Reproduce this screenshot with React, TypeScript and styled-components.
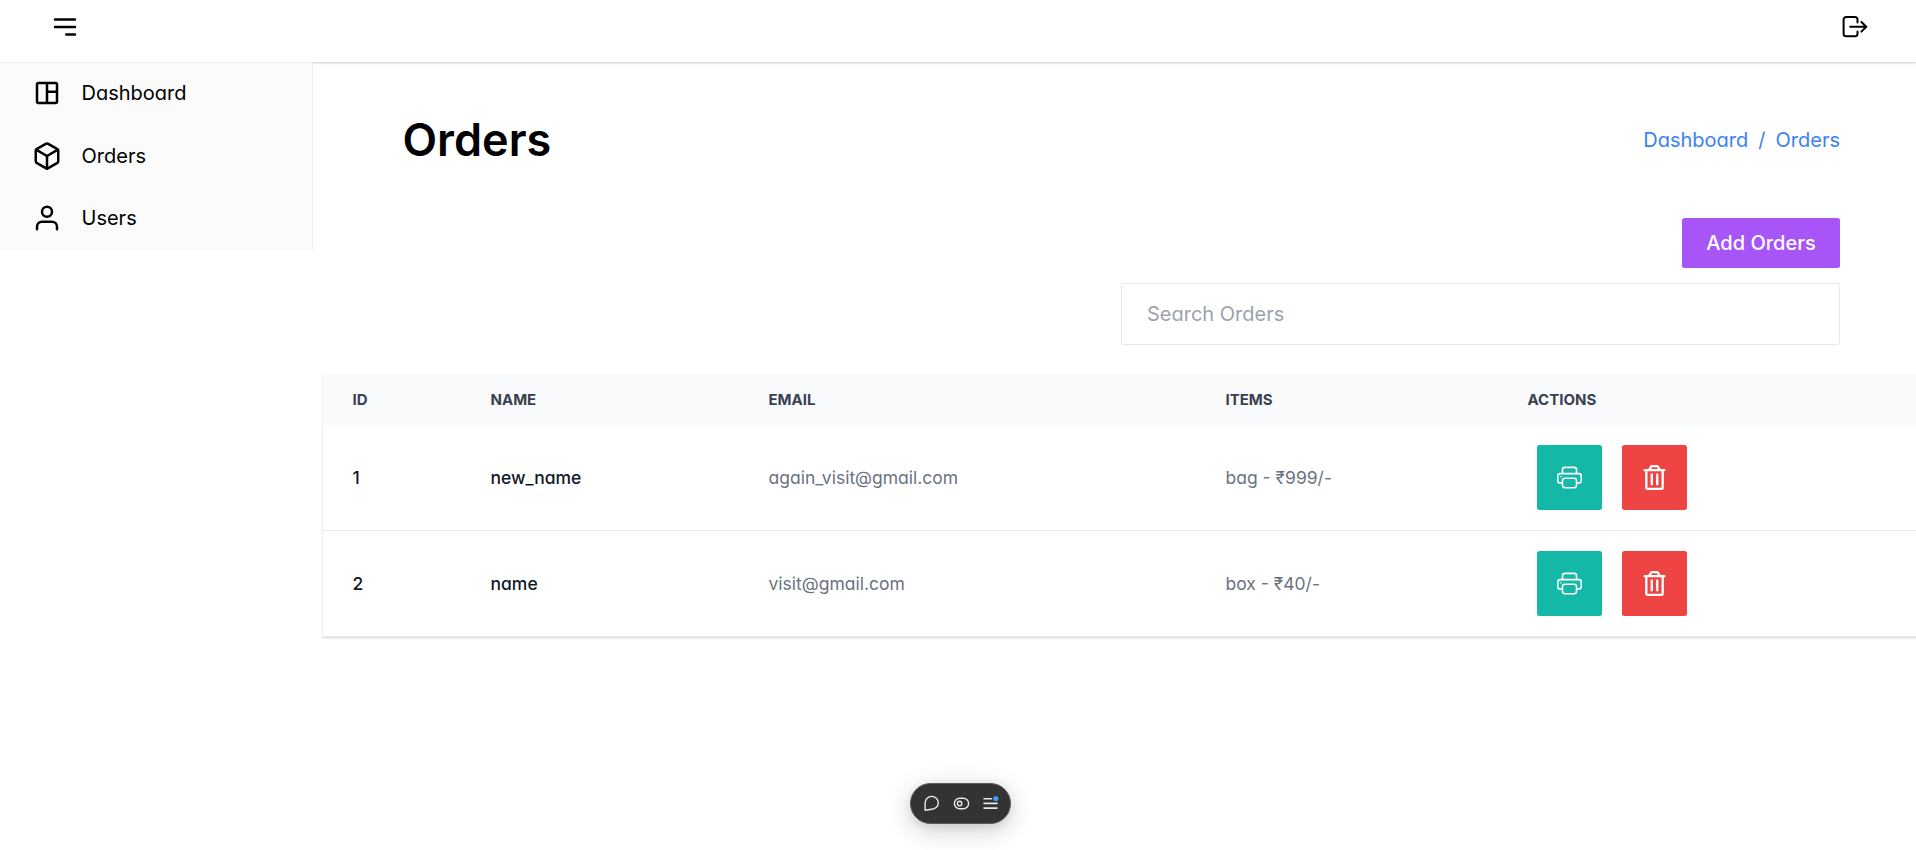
import React from "react";
import styled, { createGlobalStyle } from "styled-components";
import { BsPrinter } from "react-icons/bs";
import { FaRegTrashAlt } from "react-icons/fa";
import { FiBox, FiUser } from "react-icons/fi";
import { HiOutlineMenuAlt3 } from "react-icons/hi";

const GlobalStyle = createGlobalStyle`
  *, *::before, *::after { box-sizing: border-box; }
  body {
    margin: 0;
    background: #fff;
    color: #000;
    font-family: Inter, "Noto Sans", sans-serif;
    font-size: 20px;
    line-height: 30px;
    font-feature-settings: "cv11";
    -webkit-font-smoothing: antialiased;
    overflow: hidden;
  }
`;

const Page = styled.div`
  height: 850px;
  display: flex;
  flex-direction: column;
  overflow: hidden;
`;

const TopBar = styled.header`
  flex: none;
  height: 62px;
  padding: 12px 48px 0 50px;
  display: flex;
  justify-content: space-between;
  background: #fff;
  box-shadow: 0 1px 3px rgba(0, 0, 0, 0.12), 0 1px 2px rgba(0, 0, 0, 0.1);
`;

const IconButton = styled.button`
  display: block;
  height: 30px;
  padding: 0;
  border: 0;
  background: none;
  color: #000;
  svg { display: block; }
`;

const Body = styled.div`
  flex: 1;
  min-height: 0;
  display: flex;
  align-items: flex-start;
`;

const Sidebar = styled.nav`
  position: relative;
  flex: none;
  width: 313px;
  background: #fbfbfb;
  border-right: 1px solid #ececee;
  box-shadow: inset 0 2px 2px -1px rgba(0, 0, 0, 0.05);
`;

const NavItem = styled.a`
  display: flex;
  align-items: center;
  gap: 20px;
  height: 62.5px;
  padding-left: 31.5px;
  font-weight: 400;
`;

const Main = styled.main`
  flex: 1;
  min-width: 0;
  overflow: hidden;
  margin-top: 4px;
  padding: 40px 0 20px 9.5px;
`;

const Head = styled.div`
  display: flex;
  flex-direction: column;
  padding: 0 76px 0 80px;
`;

const TitleRow = styled.div`
  display: flex;
  align-items: center;
  justify-content: space-between;
  height: 68px;
`;

const Title = styled.h1`
  margin: 0;
  font-size: 45px;
  line-height: 50px;
  font-weight: 600;
`;

const Crumbs = styled.div`
  display: flex;
  gap: 10px;
  color: #3b82f6;
`;

const AddButton = styled.button`
  align-self: flex-end;
  margin-top: 44px;
  width: 158px;
  height: 50px;
  padding: 0;
  border: 0;
  border-radius: 2.5px;
  background: #a855f7;
  color: #fff;
  font: inherit;
  font-weight: 500;
`;

const SearchInput = styled.input`
  align-self: flex-end;
  margin-top: 15px;
  width: 719px;
  height: 62px;
  padding: 0 25px;
  border: 1px solid #e5e7eb;
  border-radius: 2.5px;
  background: #fff;
  font: inherit;
  font-feature-settings: "cv11";
  &::placeholder { color: #9ca3af; opacity: 1; }
`;

const Table = styled.div`
  margin-top: 30px;
  width: 1700px;
  box-shadow: 0 1px 3px rgba(0, 0, 0, 0.1), 0 1px 2px 0 rgba(0, 0, 0, 0.08);
`;

const TableRow = styled.div`
  display: grid;
  grid-template-columns: 138px 278px 457px 302px 1fr;
  align-items: center;
  height: 106px;
  border-bottom: 1px solid #e5e7eb;
  background: #fff;
  font-size: 17.5px;
  line-height: 25px;
`;

const HeadRow = styled(TableRow)`
  height: 50px;
  border-bottom: 0;
  background: #f9fafb;
  color: #374151;
  font-size: 15px;
  line-height: 20px;
  font-weight: 700;
  text-transform: uppercase;
`;

const Cell = styled.div<{ $strong?: boolean }>`
  padding-left: 30px;
  white-space: nowrap;
  color: ${(p) => (p.$strong ? "#111827" : "#6b7280")};
  font-weight: ${(p) => (p.$strong ? 500 : 400)};
`;

const HeadCell = styled.div`
  padding-left: 30px;
`;

const Actions = styled.div`
  display: flex;
  gap: 20px;
  padding-left: 39.5px;
`;

const ActionButton = styled.button<{ $color: string }>`
  display: flex;
  align-items: center;
  justify-content: center;
  width: 65px;
  height: 65px;
  padding: 0;
  border: 0;
  border-radius: 2.5px;
  color: #fff;
  background: ${(p) => p.$color};
`;

const FloatingBar = styled.div`
  position: absolute;
  left: 910px;
  top: 783px;
  width: 101px;
  height: 41px;
  padding: 0 11px 0 12px;
  display: flex;
  align-items: center;
  justify-content: space-between;
  border: 1px solid #5c5c5c;
  border-radius: 21px;
  background: #333;
  box-shadow: 0 6px 26px rgba(0, 0, 0, 0.2), 0 2px 8px rgba(0, 0, 0, 0.08);
  svg { display: block; }
`;

const LogoutIcon = () => (
  <svg width="26" height="30" viewBox="0 0 26 30" fill="none" stroke="currentColor" strokeWidth="2" strokeLinecap="round" strokeLinejoin="round">
    <path d="M15.5 10.6V7.6a2.6 2.6 0 0 0-2.6-2.6H4.2a2.6 2.6 0 0 0-2.6 2.6v14.1a2.6 2.6 0 0 0 2.6 2.6h8.7a2.6 2.6 0 0 0 2.6-2.6v-2.1" />
    <path d="M8.2 14.8H24.2M19.4 10l4.9 4.8-4.9 4.8" />
  </svg>
);

const LayoutIcon = () => (
  <svg width="30" height="30" viewBox="0 0 24 24" fill="currentColor">
    <path d="M19 3H5c-1.103 0-2 .897-2 2v14c0 1.103.897 2 2 2h14c1.103 0 2-.897 2-2V5c0-1.103-.897-2-2-2zm0 2v5h-6V5h6zM5 5h6v14H5V5zm8 14v-7h6v7h-6z" />
  </svg>
);

const CommentIcon = () => (
  <svg width="17" height="17" viewBox="0 0 17 17" fill="none" stroke="#e8e8e8" strokeWidth="1.4" strokeLinejoin="round">
    <path d="M2.1 15.2V8A6.6 6.4 0 1 1 8.7 14.2z" />
  </svg>
);

const ToggleIcon = () => (
  <svg width="17" height="17" viewBox="0 0 17 17" fill="none" stroke="#e8e8e8" strokeWidth="1.4">
    <rect x="1.4" y="3.2" width="14.2" height="10.6" rx="5.3" />
    <circle cx="6.6" cy="8.5" r="2.2" />
  </svg>
);

const ListIcon = () => (
  <svg width="17" height="17" viewBox="0 0 17 17" fill="none" stroke="#e8e8e8" strokeWidth="1.6" strokeLinecap="round">
    <path d="M2 3.7h7.5M2 8.4h13M2 13.1h13" />
    <circle cx="13.8" cy="3.5" r="2.6" fill="#3e9bff" stroke="none" />
  </svg>
);

const orders = [
  { id: 1, name: "new_name", email: "again_visit@gmail.com", items: "bag - ₹999/-" },
  { id: 2, name: "name", email: "visit@gmail.com", items: "box - ₹40/-" },
];

export default function App() {
  return (
    <Page>
      <GlobalStyle />
      <TopBar>
        <IconButton aria-label="Toggle menu"><HiOutlineMenuAlt3 size={30} /></IconButton>
        <IconButton aria-label="Log out"><LogoutIcon /></IconButton>
      </TopBar>
      <Body>
        <Sidebar>
          <NavItem><LayoutIcon />Dashboard</NavItem>
          <NavItem><FiBox size={30} />Orders</NavItem>
          <NavItem><FiUser size={30} />Users</NavItem>
        </Sidebar>
        <Main>
          <Head>
            <TitleRow>
              <Title>Orders</Title>
              <Crumbs><span>Dashboard</span><span>/</span><span>Orders</span></Crumbs>
            </TitleRow>
            <AddButton>Add Orders</AddButton>
            <SearchInput placeholder="Search Orders" />
          </Head>
          <Table>
            <HeadRow>
              {["ID", "Name", "Email", "Items", "Actions"].map((label) => (
                <HeadCell key={label}>{label}</HeadCell>
              ))}
            </HeadRow>
            {orders.map((order) => (
              <TableRow key={order.id}>
                <Cell $strong>{order.id}</Cell>
                <Cell $strong>{order.name}</Cell>
                <Cell>{order.email}</Cell>
                <Cell>{order.items}</Cell>
                <Actions>
                  <ActionButton $color="#14b8a6" aria-label="Print"><BsPrinter size={25} /></ActionButton>
                  <ActionButton $color="#ef4444" aria-label="Delete"><FaRegTrashAlt size={25} /></ActionButton>
                </Actions>
              </TableRow>
            ))}
          </Table>
        </Main>
      </Body>
      <FloatingBar>
        <CommentIcon />
        <ToggleIcon />
        <ListIcon />
      </FloatingBar>
    </Page>
  );
}
